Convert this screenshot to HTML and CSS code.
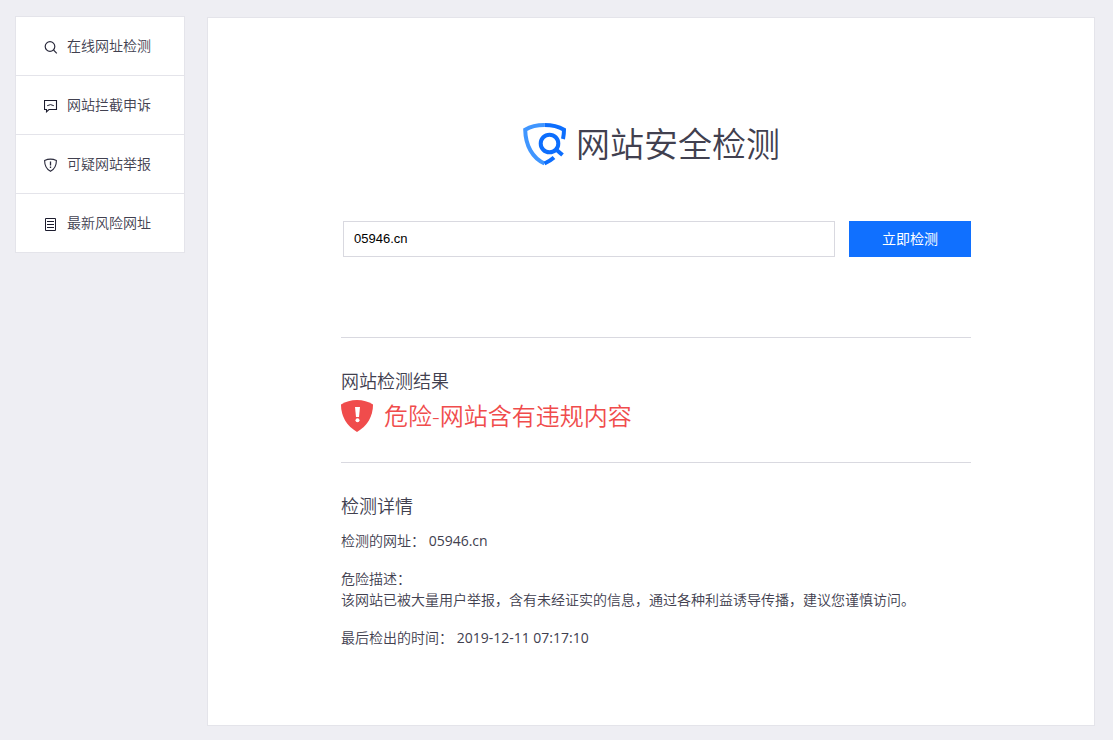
FILE: index.html
```html
<!DOCTYPE html>
<html lang="zh-CN">
<head>
    <meta charset="UTF-8">
    <meta name="viewport" content="width=device-width, initial-scale=1.0">
    <title>网站安全检测</title>
    <link rel="stylesheet" href="styles.css">
</head>
<body>
    <div class="page">
        <nav class="sidebar">
            <a href="#check">
                <svg width="14" height="14" viewBox="0 0 14 14" fill="none" stroke="#2b2b3d" stroke-width="1.2">
                    <circle cx="6" cy="6.5" r="4.8"/>
                    <path d="M9.5 10L12.8 13.3"/>
                </svg>
                <span>在线网址检测</span>
            </a>
            <a href="#appeal">
                <svg width="14" height="14" viewBox="0 0 14 14" fill="none" stroke="#1c1c2e">
                    <path d="M.5 1.5h12v9H5L2.5 12.8v-2.3h-2z" stroke-width="1.1"/>
                    <path d="M3.2 6.7q3.3-2.2 6.6 0"/>
                </svg>
                <span>网站拦截申诉</span>
            </a>
            <a href="#report">
                <svg width="14" height="14" viewBox="0 0 14 14" fill="none" stroke="#2b2b3d" stroke-width="1.1">
                    <path d="M.6 2.5Q6.5-.2 12.4 2.5C12.4 8 10.500 11.2 6.5 13.3C2.5 11.2.6 8 .6 2.5z"/>
                    <path d="M6.5 3.5v4M6.5 8.6v1.3" stroke-width="1.3"/>
                </svg>
                <span>可疑网站举报</span>
            </a>
            <a href="#latest">
                <svg width="14" height="14" viewBox="0 0 14 14" fill="none" stroke="#1c1c2e">
                    <path d="M1.5 1.5h10v12h-10zM3 4.5h7M3 7.5h7M3 10.5h7"/>
                </svg>
                <span>最新风险网址</span>
            </a>
        </nav>

        <main class="panel">
            <h1 class="title">
                <svg width="44" height="44" viewBox="0 0 44 44" fill="none" stroke-width="4">
                    <path d="M22.5 3C15 3 8.5 4.5 3.2 7.7C3.5 23.5 10.5 36 22.5 41.5" stroke="#4096ff"/>
                    <path d="M22.5 3C30 3 36.5 4.5 42 7.7Q42 12 41 17M22.5 41.5Q28 39 32 35.5" stroke="#0d6efd"/>
                    <circle cx="27.5" cy="21.5" r="8.8" stroke="#0d6efd" stroke-width="4"/>
                    <path d="M33.5 27L40.5 33" stroke="#0d6efd" stroke-width="4"/>
                </svg>
                <span>网站安全检测</span>
            </h1>

            <div class="content">
                <form class="search">
                    <input type="text" value="05946.cn" aria-label="网址">
                    <button type="button">立即检测</button>
                </form>

                <section class="result">
                    <h2>网站检测结果</h2>
                    <div class="danger">
                        <svg width="32" height="32" viewBox="0 0 32 32">
                            <path d="M0 4.5Q7 0 16 0T32 4.5C32 17 26 26 16 32C6 26 0 17 0 4.5z" fill="#f04c4c"/>
                            <path d="M14 7h5l-1 10h-3z" fill="#fff"/>
                            <circle cx="16.5" cy="20.3" r="2" fill="#fff"/>
                        </svg>
                        <span>危险-网站含有违规内容</span>
                    </div>
                </section>

                <section class="detail">
                    <h2>检测详情</h2>
                    <p>检测的网址： <span class="value">05946.cn</span></p>
                    <p>危险描述：<br>该网站已被大量用户举报，含有未经证实的信息，通过各种利益诱导传播，建议您谨慎访问。</p>
                    <p>最后检出的时间： <span class="value">2019-12-11 07:17:10</span></p>
                </section>
            </div>
        </main>
    </div>
</body>
</html>
```
FILE: styles.css
```css
* {
    box-sizing: border-box;
}
body {
    margin: 0;
    background: #eeeef3;
    color: #41404f;
    font-family: "Open Sans", "Noto Sans CJK SC", sans-serif;
    font-size: 14px;
    font-weight: 350;
    line-height: 21px;
}
h1, h2, p {
    margin: 0;
    font-weight: 350;
}
svg {
    flex: none;
}
.page {
    display: flex;
    align-items: flex-start;
    gap: 22px;
    padding: 16px 18px 14px 15px;
}

.sidebar {
    flex: none;
    width: 170px;
    border: 1px solid #e4e4ea;
    background: #fff;
}
.sidebar a {
    display: flex;
    align-items: center;
    gap: 9px;
    height: 58px;
    padding: 0 0 2px 28px;
    color: #41404f;
    text-decoration: none;
}
.sidebar a + a {
    height: 59px;
    border-top: 1px solid #e4e4ea;
}
.sidebar svg {
    margin-top: 4px;
}

.panel {
    flex: 1;
    margin-top: 1px;
    padding: 102px 0 60px;
    border: 1px solid #e4e4ea;
    background: #fff;
}
.title {
    display: flex;
    justify-content: center;
    align-items: center;
    gap: 10px;
    font-size: 34px;
    line-height: 48px;
}
.content {
    padding: 0 123px 0 133px;
}

.search {
    display: flex;
    gap: 14px;
    margin-top: 53px;
    padding-left: 2px;
}
.search input {
    flex: 1;
    height: 36px;
    padding: 0 10px 2px;
    border: 1px solid #d9d9e0;
    font-family: "Liberation Sans", Arial, sans-serif;
    font-size: 13px;
    color: #000;
}
.search button {
    width: 122px;
    height: 36px;
    padding: 0 0 2px;
    border: 0;
    background: #1070ff;
    color: #fff;
    font-family: inherit;
    font-size: 14px;
}

.result {
    margin-top: 80px;
    padding: 29px 0 28px;
    border-top: 1px solid #d9d9e0;
    border-bottom: 1px solid #d9d9e0;
}
h2 {
    font-size: 18px;
    line-height: 28px;
}
.danger {
    display: flex;
    align-items: center;
    gap: 11px;
    margin-top: 3px;
    color: #f04c4c;
    font-size: 24px;
    line-height: 36px;
}

.detail {
    padding-top: 29px;
}
.detail p {
    margin-bottom: 17px;
}
.detail h2 {
    margin-bottom: 10px;
}
.value {
    font-weight: 400;
}
```
